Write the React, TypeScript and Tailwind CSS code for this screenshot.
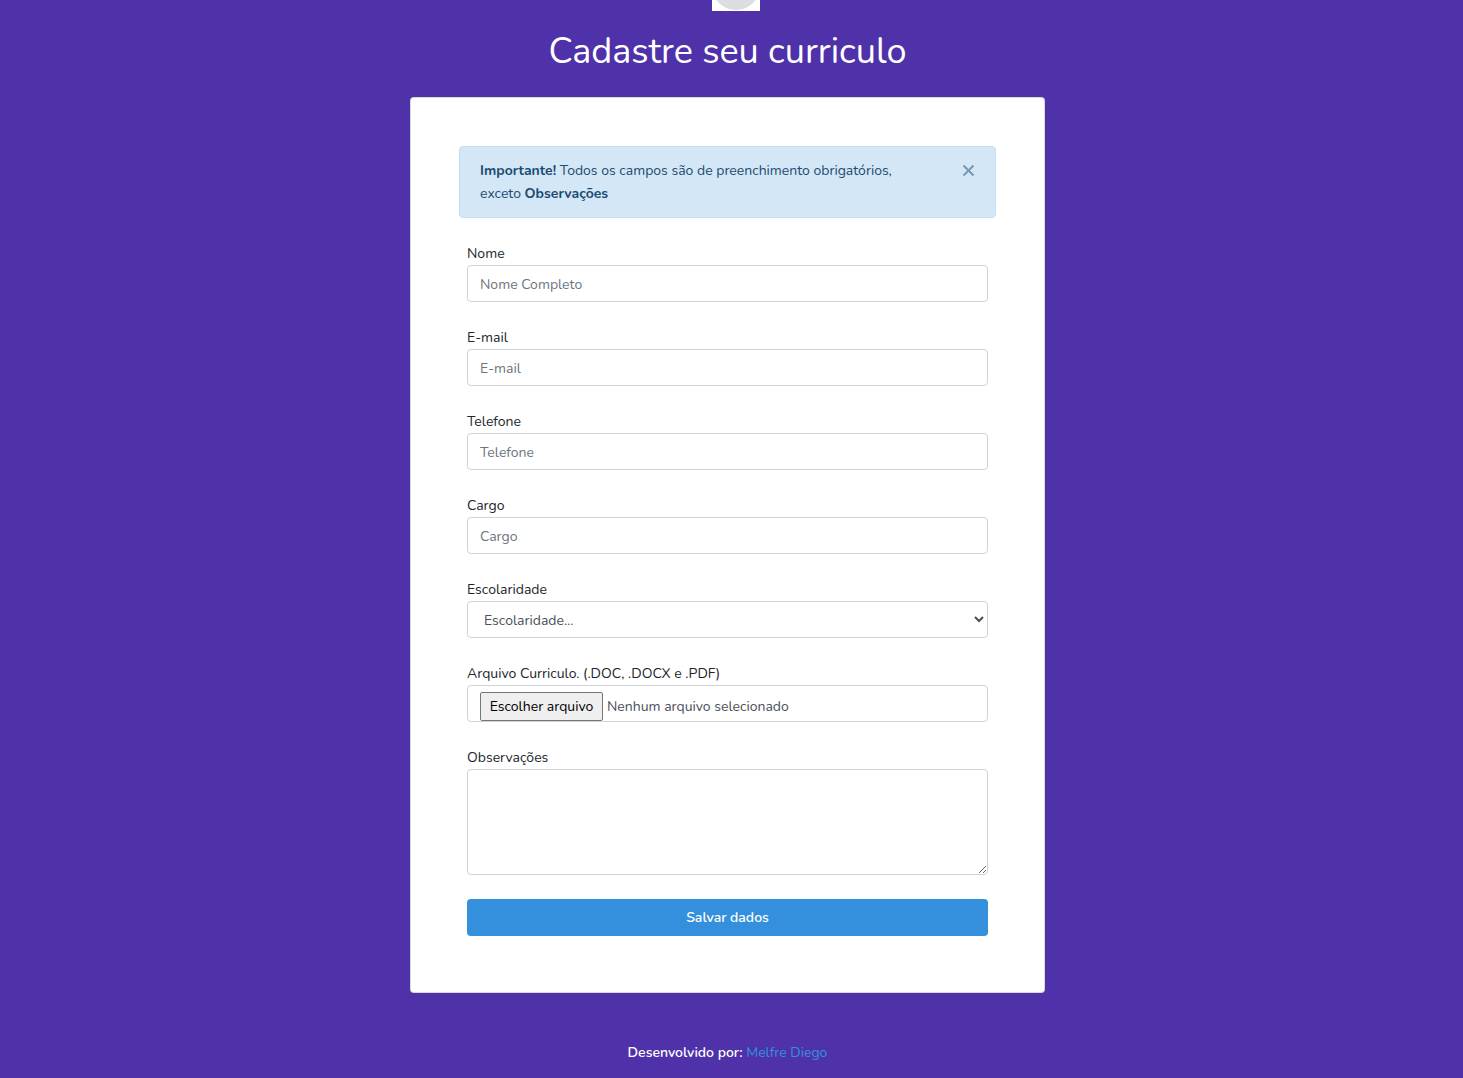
import React, { useRef, useState } from "react";

const control =
  "block w-full h-[37px] rounded border border-[#ced4da] bg-white px-3 pt-2 pb-1.5 text-[#495057] placeholder:text-[#6c757d] placeholder:opacity-100 outline-none focus:border-[#a1cbef]";

function Field({ id, label, children }: { id: string; label: string; children: React.ReactNode }) {
  return (
    <div className="mb-6">
      <label htmlFor={id} className="block">
        {label}
      </label>
      {children}
    </div>
  );
}

export default function App() {
  const [alert, setAlert] = useState(true);
  const [fileName, setFileName] = useState("Nenhum arquivo selecionado");
  const fileRef = useRef<HTMLInputElement>(null);

  return (
    <div className="min-h-screen bg-[#4f31aa] pb-3 pr-2 font-['Nunito','Open_Sans',sans-serif] text-[14px] leading-[23px] text-[#212529]">
      <header className="flex flex-col items-center text-white">
        <div className="ml-4 h-[11px] w-12 overflow-hidden bg-white">
          <svg viewBox="0 0 48 11" className="h-full w-full" aria-hidden="true">
            <circle cx="24" cy="-14" r="24" fill="#dcdde0" />
          </svg>
        </div>
        <h1 className="mt-4 text-[36px] leading-[50px]">Cadastre seu curriculo</h1>
      </header>

      <main className="mx-auto mt-5 w-full max-w-[635px] rounded border border-black/15 bg-white p-12">
        {alert && (
          <div role="alert" className="flex items-start justify-between rounded border border-[#c4ddf5] bg-[#d4e7f6] px-5 py-3 text-[#1b4b72]">
            <p className="w-[440px]">
              <strong>Importante!</strong> Todos os campos são de preenchimento obrigatórios, exceto <strong>Observações</strong>
            </p>
            <button type="button" aria-label="Fechar" onClick={() => setAlert(false)} className="flex h-[22px] items-center opacity-50">
              <svg viewBox="0 0 13 13" className="size-[13px]" fill="none" stroke="currentColor" strokeWidth="2" aria-hidden="true">
                <path d="M1.5 1.5 11.5 11.5M11.5 1.5 1.5 11.5" />
              </svg>
            </button>
          </div>
        )}
        <form className="mt-6 px-2" onSubmit={(e) => e.preventDefault()}>
          <Field id="nome" label="Nome">
            <input id="nome" type="text" placeholder="Nome Completo" className={control} />
          </Field>
          <Field id="email" label="E-mail">
            <input id="email" type="email" placeholder="E-mail" className={control} />
          </Field>
          <Field id="telefone" label="Telefone">
            <input id="telefone" type="tel" placeholder="Telefone" className={control} />
          </Field>
          <Field id="cargo" label="Cargo">
            <input id="cargo" type="text" placeholder="Cargo" className={control} />
          </Field>
          <Field id="escolaridade" label="Escolaridade">
            <select id="escolaridade" className={control}>
              <option>Escolaridade...</option>
            </select>
          </Field>
          <Field id="arquivo" label="Arquivo Curriculo. (.DOC, .DOCX e .PDF)">
            <div className="flex h-[37px] items-end rounded border border-[#ced4da] px-3 text-[#495057]">
              <input
                ref={fileRef}
                id="arquivo"
                type="file"
                accept=".doc,.docx,.pdf"
                className="sr-only"
                tabIndex={-1}
                onChange={(e) => setFileName(e.target.files?.[0]?.name ?? "Nenhum arquivo selecionado")}
              />
              <button
                type="button"
                onClick={() => fileRef.current?.click()}
                className="mr-1 h-[29px] w-[123px] rounded-[2px] border border-[#767676] bg-[#efefef] text-black"
              >
                Escolher arquivo
              </button>
              <span className="pb-[3px]">{fileName}</span>
            </div>
          </Field>
          <Field id="obs" label="Observações">
            <textarea id="obs" className="block h-[106px] w-full rounded border border-[#ced4da] px-3 py-1.5 outline-none" />
          </Field>
          <button type="submit" className="mb-2 block h-[37px] w-full rounded bg-[#3490dc] font-semibold text-white">
            Salvar dados
          </button>
        </form>
      </main>

      <footer className="mt-12 text-center text-white">
        <strong className="font-semibold">Desenvolvido por:</strong>{" "}
        <a href="#" className="text-[#3490dc]">
          Melfre Diego
        </a>
      </footer>
    </div>
  );
}
